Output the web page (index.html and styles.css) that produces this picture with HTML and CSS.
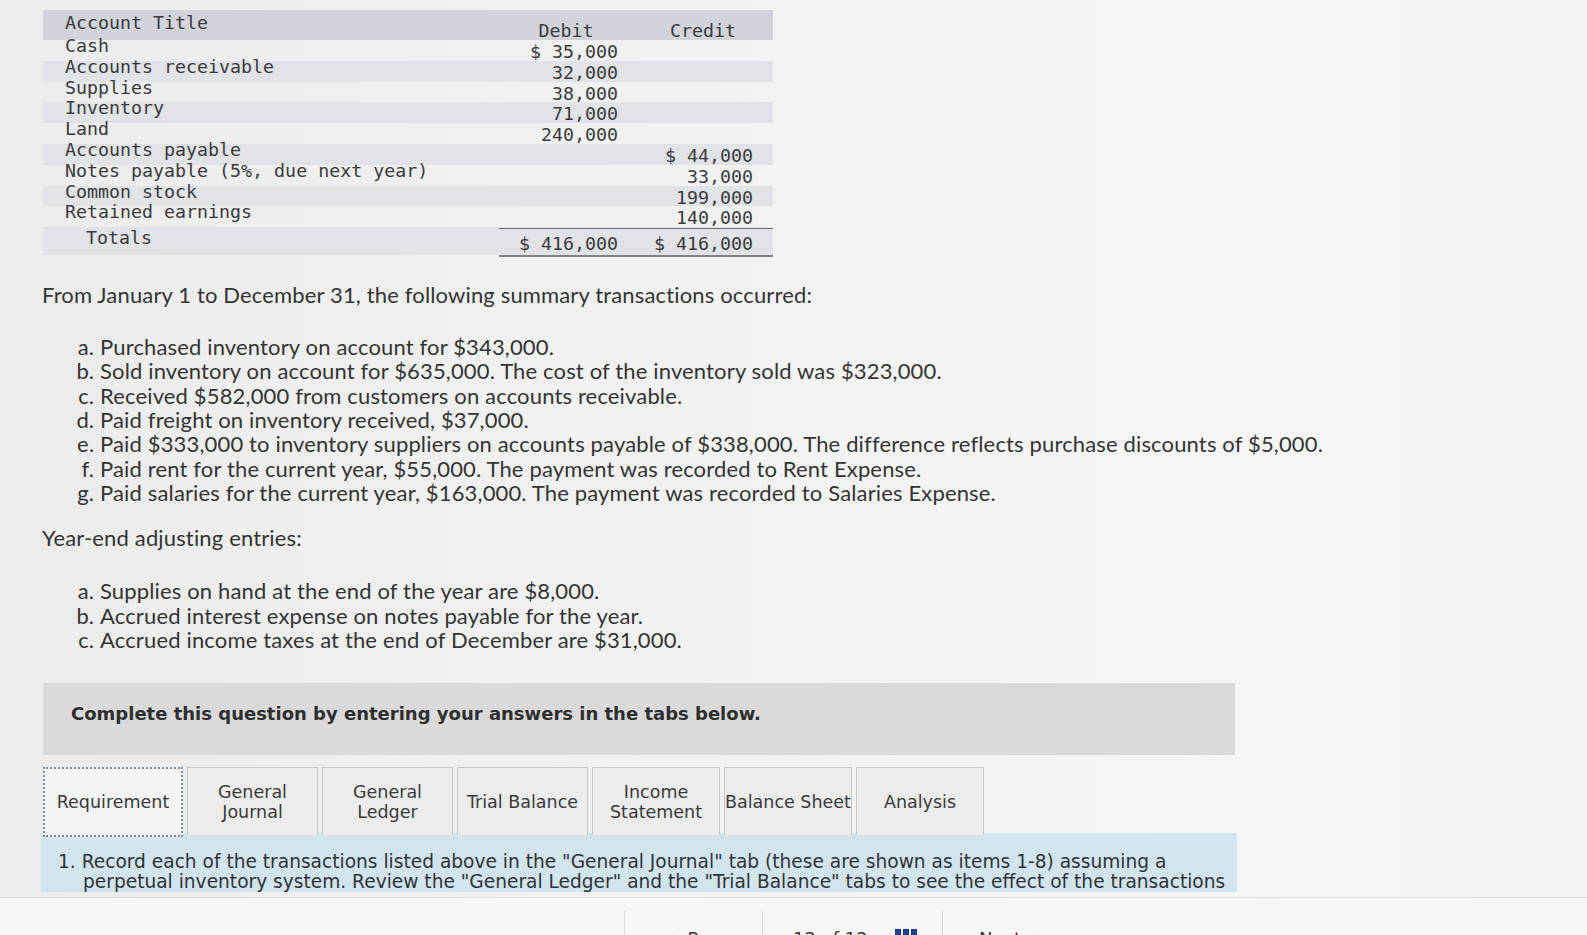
FILE: index.html
```html
<!DOCTYPE html>
<html lang="en">
<head>
<meta charset="utf-8">
<title>Trial balance question</title>
<link rel="stylesheet" href="styles.css">
</head>
<body>
<div class="page">
  <div class="tb">
    <div class="tb-row tb-head"><div class="c-name">Account Title</div><div class="c-dr">Debit</div><div class="c-cr">Credit</div></div>
    <div class="tb-row"><div class="c-name">Cash</div><div class="c-dr">$ 35,000</div><div class="c-cr"></div></div>
    <div class="tb-row alt"><div class="c-name">Accounts receivable</div><div class="c-dr">32,000</div><div class="c-cr"></div></div>
    <div class="tb-row"><div class="c-name">Supplies</div><div class="c-dr">38,000</div><div class="c-cr"></div></div>
    <div class="tb-row alt"><div class="c-name">Inventory</div><div class="c-dr">71,000</div><div class="c-cr"></div></div>
    <div class="tb-row"><div class="c-name">Land</div><div class="c-dr">240,000</div><div class="c-cr"></div></div>
    <div class="tb-row alt"><div class="c-name">Accounts payable</div><div class="c-dr"></div><div class="c-cr">$ 44,000</div></div>
    <div class="tb-row"><div class="c-name">Notes payable (5%, due next year)</div><div class="c-dr"></div><div class="c-cr">33,000</div></div>
    <div class="tb-row alt"><div class="c-name">Common stock</div><div class="c-dr"></div><div class="c-cr">199,000</div></div>
    <div class="tb-row"><div class="c-name">Retained earnings</div><div class="c-dr"></div><div class="c-cr">140,000</div></div>
    <div class="tb-row tb-total alt"><div class="c-name">Totals</div><div class="c-dr">$ 416,000</div><div class="c-cr">$ 416,000</div></div>
  </div>

  <p class="lead">From January 1 to December 31, the following summary transactions occurred:</p>
  <ol class="items">
    <li>Purchased inventory on account for $343,000.</li>
    <li>Sold inventory on account for $635,000. The cost of the inventory sold was $323,000.</li>
    <li>Received $582,000 from customers on accounts receivable.</li>
    <li>Paid freight on inventory received, $37,000.</li>
    <li>Paid $333,000 to inventory suppliers on accounts payable of $338,000. The difference reflects purchase discounts of $5,000.</li>
    <li>Paid rent for the current year, $55,000. The payment was recorded to Rent Expense.</li>
    <li>Paid salaries for the current year, $163,000. The payment was recorded to Salaries Expense.</li>
  </ol>

  <p class="lead lead-adj">Year-end adjusting entries:</p>
  <ol class="items items-adj">
    <li>Supplies on hand at the end of the year are $8,000.</li>
    <li>Accrued interest expense on notes payable for the year.</li>
    <li>Accrued income taxes at the end of December are $31,000.</li>
  </ol>

  <div class="prompt">Complete this question by entering your answers in the tabs below.</div>

  <div class="tabs">
    <div class="tab tab-active">Requirement</div>
    <div class="tab">General<br>Journal</div>
    <div class="tab">General<br>Ledger</div>
    <div class="tab">Trial Balance</div>
    <div class="tab tab-narrow">Income<br>Statement</div>
    <div class="tab tab-narrow">Balance Sheet</div>
    <div class="tab tab-narrow">Analysis</div>
  </div>

  <div class="req">
    <p class="req-text">1. Record each of the transactions listed above in the "General Journal" tab (these are shown as items 1-8) assuming a perpetual inventory system. Review the "General Ledger" and the "Trial Balance" tabs to see the effect of the transactions on the account balances.</p>
  </div>

  <div class="nav">
    <div class="nav-box nav-prev">&lt;&nbsp; Prev</div>
    <div class="nav-box nav-count">12 of 12 <span class="grid-ico"><i></i><i></i><i></i></span></div>
    <div class="nav-box nav-next">Next &nbsp;&gt;</div>
  </div>
</div>
</body>
</html>
```

FILE: styles.css
```css
html, body {
  margin: 0;
  padding: 0;
}

body {
  width: 1587px;
  height: 935px;
  overflow: hidden;
  background: linear-gradient(90deg, #ececec 0%, #f2f2f2 45%, #f6f6f6 80%, #f3f3f3 100%);
  color: #343434;
  font-family: "Lato", "Liberation Sans", sans-serif;
}

.page {
  padding-top: 10px;
}

/* ---------- trial balance ---------- */
.tb {
  margin-left: 43px;
  width: 730px;
  font-family: "DejaVu Sans Mono", "Liberation Mono", monospace;
  font-size: 18.3px;
  color: #3a3a3e;
}

.tb-row {
  display: grid;
  grid-template-columns: 456px 134px 140px;
  height: 20.8px;
}

.tb-row.alt {
  background: #e2e3e7;
}

.tb-head {
  height: 30px;
  background: #d3d4db;
}

.c-name {
  padding-left: 22px;
  line-height: 12px;
  white-space: pre;
}

.c-dr,
.c-cr {
  text-align: right;
  padding-top: 2px;
  line-height: 20.8px;
  white-space: pre;
}

.c-dr {
  padding-right: 15px;
}

.c-cr {
  padding-right: 20px;
}

.tb-head .c-name {
  line-height: 26px;
}

.tb-head .c-dr,
.tb-head .c-cr {
  align-self: end;
  line-height: 18px;
  padding-top: 0;
  text-align: center;
  padding-right: 0;
}

.tb-total {
  height: 28px;
}

.tb-total .c-name {
  padding-left: 43px;
  line-height: 22px;
}

.tb-total .c-dr,
.tb-total .c-cr {
  border-top: 1.5px solid #6f6f73;
  border-bottom: 2px solid #808085;
  padding-top: 4px;
  line-height: 22px;
  margin-top: 1px;
}

/* ---------- question text ---------- */
.lead {
  margin: 28px 0 0 42px;
  font-size: 22px;
  letter-spacing: 0.15px;
  line-height: 24px;
}

.items {
  margin: 28px 0 0 0;
  padding-left: 100px;
  list-style-type: lower-alpha;
  font-size: 22px;
  letter-spacing: 0.15px;
  line-height: 24.3px;
}

.lead-adj {
  margin-top: 21px;
}

.items-adj {
  margin-top: 29px;
}

/* ---------- prompt box ---------- */
.prompt {
  margin: 31px 0 0 43px;
  width: 1192px;
  height: 72px;
  box-sizing: border-box;
  padding: 21px 28px 0;
  background: #dadadb;
  font-family: "DejaVu Sans", "Verdana", sans-serif;
  font-weight: bold;
  font-size: 18px;
  line-height: 20px;
  color: #2e2e2e;
}

/* ---------- tabs ---------- */
.tabs {
  margin: 12px 0 -4px 43px;
  display: flex;
  gap: 4px;
  position: relative;
  z-index: 1;
}

.tab {
  width: 131px;
  height: 68px;
  box-sizing: border-box;
  display: flex;
  align-items: center;
  justify-content: center;
  text-align: center;
  border: 1px solid #c9c9cc;
  border-bottom: none;
  background: #ececed;
  font-family: "DejaVu Sans", "Verdana", sans-serif;
  font-size: 17.5px;
  line-height: 20px;
  color: #3a3a3a;
  white-space: nowrap;
}

.tab-narrow {
  width: 128px;
}

.tab-active {
  width: 140px;
  height: 70px;
  background: #f3f3f4;
  border: 2px dotted #7d8b99;
}

/* ---------- requirement ---------- */
.req {
  margin-left: 41px;
  width: 1196px;
  height: 59px;
  overflow: hidden;
  background: #d2e5ef;
  box-sizing: border-box;
  padding: 19px 4px 0 42px;
}

.req-text {
  margin: 0;
  text-indent: -25px;
  font-family: "DejaVu Sans", "Verdana", sans-serif;
  font-size: 18.6px;
  line-height: 20px;
  color: #2f3338;
}

/* ---------- bottom navigation ---------- */
.nav {
  margin-top: 5px;
  border-top: 1px solid #e0e0e0;
  background: #f6f6f6;
  height: 60px;
  box-sizing: border-box;
  padding: 13px 0 0 624px;
  display: flex;
}

.nav-box {
  box-sizing: border-box;
  border-left: 1px solid #dcdcdc;
  padding-top: 17px;
  font-family: "DejaVu Sans", "Verdana", sans-serif;
  font-size: 18px;
  line-height: 22px;
  color: #3a3a3a;
  height: 60px;
}

.nav-prev {
  width: 138px;
  padding-left: 36px;
}

.nav-count {
  width: 180px;
  padding-left: 30px;
}

.nav-next {
  width: 140px;
  padding-left: 36px;
}

.grid-ico {
  display: inline-flex;
  gap: 2px;
  margin-left: 22px;
  vertical-align: top;
  margin-top: 1px;
}

.grid-ico i {
  display: block;
  width: 6px;
  height: 6px;
  background: #1b3f8f;
}
```
